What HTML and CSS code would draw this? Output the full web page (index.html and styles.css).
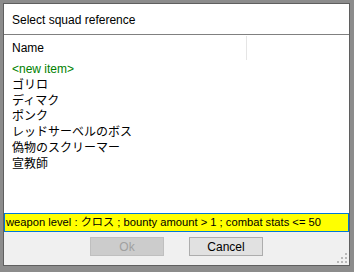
FILE: index.html
```html
<!DOCTYPE html>
<html lang="ja">
<head>
    <meta charset="UTF-8" />
    <title>Select squad reference</title>
    <link rel="stylesheet" href="styles.css">
</head>
<body>
<div class="window">
    <div class="title">Select squad reference</div>
    <div class="list">
        <div class="list-header">
            <div class="col-name">Name</div>
            <div class="col-rest"></div>
        </div>
        <div class="items">
            <div class="item new-item">&lt;new item&gt;</div>
            <div class="item">ゴリロ</div>
            <div class="item">ディマク</div>
            <div class="item">ポンク</div>
            <div class="item">レッドサーベルのボス</div>
            <div class="item">偽物のスクリーマー</div>
            <div class="item">宣教師</div>
        </div>
    </div>
    <div class="filter">weapon level : クロス ; bounty amount &gt; 1 ; combat stats &lt;= 50</div>
    <div class="footer">
        <button class="btn" disabled>Ok</button>
        <button class="btn">Cancel</button>
        <svg class="grip" width="10" height="10" viewBox="0 0 10 10">
            <rect x="8" y="0" width="2" height="2" fill="#b8b8b8"/>
            <rect x="4" y="4" width="2" height="2" fill="#b8b8b8"/>
            <rect x="8" y="4" width="2" height="2" fill="#b8b8b8"/>
            <rect x="0" y="8" width="2" height="2" fill="#b8b8b8"/>
            <rect x="4" y="8" width="2" height="2" fill="#b8b8b8"/>
            <rect x="8" y="8" width="2" height="2" fill="#b8b8b8"/>
        </svg>
    </div>
</div>
</body>
</html>
```

FILE: styles.css
```css
body {
  margin: 0;
  padding: 3px 4px 6px 3px;
  background-color: #8c8c8c;
  font-family: "Liberation Sans", "Noto Sans CJK JP", sans-serif;
  font-size: 12px;
  color: #000;
}

.window {
  height: 263px;
  box-sizing: border-box;
  border: 1px solid #5f5f5f;
  background-color: #f0f0f0;
  display: flex;
  flex-direction: column;
}

.title {
  height: 30px;
  line-height: 32px;
  padding-left: 8px;
  background-color: #fff;
  border-bottom: 1px solid #808080;
  color: #000;
}

.list {
  height: 178px;
  background-color: #fff;
}

.list-header {
  display: flex;
  height: 26px;
  align-items: center;
}

.col-name {
  width: 234px;
  padding-left: 8px;
  height: 24px;
  line-height: 24px;
  border-right: 1px solid #e5e5e5;
}

.items {
  padding-left: 8px;
  padding-top: 1px;
}

.item {
  height: 15.8px;
  line-height: 15.8px;
}

.new-item {
  color: #008000;
}

.filter {
  height: 17px;
  line-height: 17px;
  border: 1px solid #0078d7;
  background-color: #ffff00;
  padding-left: 1px;
  font-size: 11.2px;
  white-space: nowrap;
}

.footer {
  flex: 1;
  position: relative;
  display: flex;
  justify-content: center;
  align-items: flex-start;
  gap: 25px;
  padding-top: 5px;
}

.btn {
  width: 74px;
  height: 19px;
  padding: 0;
  font-family: "Liberation Sans", sans-serif;
  font-size: 12px;
  color: #000;
  background-color: #e1e1e1;
  border: 1px solid #adadad;
}

.btn:disabled {
  color: #a0a0a0;
  background-color: #cccccc;
  border-color: #bfbfbf;
}

.grip {
  position: absolute;
  right: 2px;
  bottom: 2px;
}
```
